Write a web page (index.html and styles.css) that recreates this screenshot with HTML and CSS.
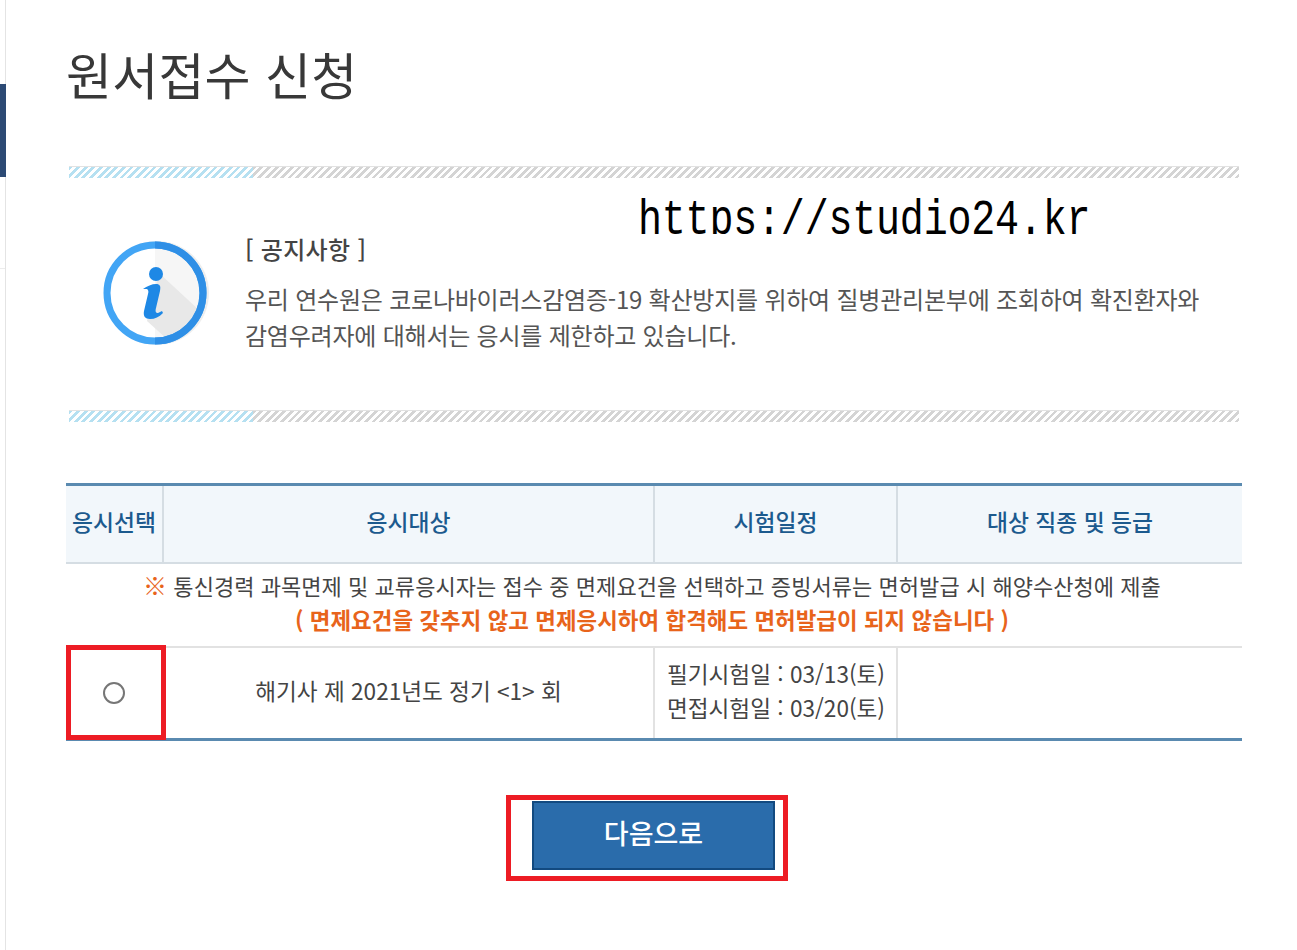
FILE: index.html
```html
<!DOCTYPE html>
<html lang="ko">
<head>
  <meta charset="UTF-8" />
  <meta name="viewport" content="width=device-width, initial-scale=1.0">
  <title>원서접수 신청</title>
  <link rel="stylesheet" href="styles.css">
</head>
<body>
  <aside class="side-rail">
    <div class="side-marker"></div>
    <div class="side-line"></div>
  </aside>

  <main class="content">
    <h1 class="page-title">원서접수 신청</h1>

    <section class="notice">
      <div class="watermark"><span>https://studio24.kr</span></div>
      <svg class="notice-icon" viewBox="0 0 108 108" aria-hidden="true">
        <circle cx="56" cy="54" r="52" fill="#eee" />
        <circle cx="54" cy="54" r="48" fill="#fff" />
        <path d="M54 6a48 48 0 0 1 0 96z" fill="#f6f6f6" />
        <path d="M58 34L99 72A48 48 0 0 1 66 100L46 82z" fill="#e8e8e8" />
        <circle cx="54" cy="54" r="48" fill="none" stroke="#42a5f5" stroke-width="7" />
        <path d="M54 6a48 48 0 0 1 0 96" fill="none" stroke="#2f8fe6" stroke-width="7" />
        <circle cx="55" cy="35" r="7" fill="#1e88e5" />
        <path d="M42 50c4-3 9-5 13-5 4 0 5 2 4 7l-4 17c-1 4 0 5 2 5l4-2 1 2c-4 4-8 6-13 6-5 0-7-3-6-8l4-17c1-3 0-5-2-5h-3z" fill="#1e88e5" />
      </svg>
      <div class="notice-body">
        <h2 class="notice-title">[ 공지사항 ]</h2>
        <p class="notice-text">우리 연수원은 코로나바이러스감염증-19 확산방지를 위하여 질병관리본부에 조회하여 확진환자와<br>감염우려자에 대해서는 응시를 제한하고 있습니다.</p>
      </div>
    </section>

    <table class="exam-table">
      <colgroup>
        <col class="col-select">
        <col class="col-target">
        <col class="col-date">
        <col class="col-grade">
      </colgroup>
      <thead>
        <tr>
          <th>응시선택</th>
          <th>응시대상</th>
          <th>시험일정</th>
          <th>대상 직종 및 등급</th>
        </tr>
      </thead>
      <tbody>
        <tr class="guide-row">
          <td colspan="4">
            <p><span class="mark">※</span> 통신경력 과목면제 및 교류응시자는 접수 중 면제요건을 선택하고 증빙서류는 면허발급 시 해양수산청에 제출</p>
            <p class="warn">( 면제요건을 갖추지 않고 면제응시하여 합격해도 면허발급이 되지 않습니다 )</p>
          </td>
        </tr>
        <tr class="exam-row">
          <td class="select-cell">
            <input type="radio" name="exam" class="radio">
            <span class="highlight highlight-radio"></span>
          </td>
          <td class="target-cell">해기사 제 2021년도 정기 &lt;1&gt; 회</td>
          <td class="date-cell">필기시험일 : 03/13(토)<br>면접시험일 : 03/20(토)</td>
          <td></td>
        </tr>
      </tbody>
    </table>

    <div class="actions">
      <span class="button-wrap">
        <button type="button" class="next-btn">다음으로</button>
        <span class="highlight highlight-btn"></span>
      </span>
    </div>
  </main>
</body>
</html>
```

FILE: styles.css
```css
:root {
  --text-color: #444;
  --head-color: #1c5a8e;
  --table-line: #d5dde3;
  --table-edge: #5a8ab0;
  --mark-red: #ed1c24;
}

* {
  box-sizing: border-box;
}

html,
body {
  height: 100%;
}

body {
  margin: 0;
  display: flex;
  overflow: hidden;
  background: #fff;
  color: var(--text-color);
  font-family: "Noto Sans CJK KR", "Noto Sans", sans-serif;
}

.side-rail {
  flex: 0 0 6px;
  border-right: 1px solid #e4e4e4;
  padding-top: 84px;
}

.side-marker {
  height: 93px;
  margin-right: -1px;
  background: #2c4a74;
}

.side-line {
  height: 1px;
  margin-top: 91px;
  background: #ececec;
}

.content {
  width: 1176px;
  margin-left: 60px;
}

.page-title {
  margin: 0;
  padding-top: 35px;
  height: 166px;
  font-size: 50px;
  line-height: 76px;
  font-weight: 400;
  letter-spacing: 0.2px;
  color: #383838;
}

/* notice box with hatched bars top and bottom */
.notice {
  position: relative;
  display: flex;
  width: 1170px;
  height: 256px;
  margin-left: 3px;
  padding: 65px 0 0 32px;
}

.notice::before,
.notice::after {
  content: "";
  position: absolute;
  left: 0;
  right: 0;
  height: 11px;
  border-top: 1px solid #e2e2e2;
  background:
    repeating-linear-gradient(135deg, transparent 0 2.7px, #fff 2.7px 5.4px) 0 0,
    linear-gradient(90deg, #b5e0f1 184px, #d4d4d4 184px);
}

.notice::before {
  top: 0;
}

.notice::after {
  bottom: 0;
}

/* the tall, narrow url is cut at its baseline in the source image */
.watermark {
  position: absolute;
  left: 569px;
  top: 30px;
  height: 38px;
  overflow: hidden;
  color: #000;
}

.watermark span {
  display: block;
  font-family: "Liberation Mono", monospace;
  font-size: 40px;
  line-height: 40px;
  letter-spacing: -0.2px;
  white-space: nowrap;
  transform: scaleY(1.26);
  transform-origin: 0 0;
}

.notice-icon {
  flex: none;
  width: 108px;
  height: 108px;
  margin-top: 8px;
  overflow: visible;
}

.notice-body {
  margin-left: 36px;
}

.notice-title {
  margin: 0;
  font-size: 24px;
  line-height: 36px;
  font-weight: 500;
  letter-spacing: 0.3px;
  color: #444;
}

.notice-text {
  margin: 14px 0 0;
  font-size: 24px;
  line-height: 36px;
  letter-spacing: -0.22px;
  color: #555;
}

.exam-table {
  width: 1176px;
  margin-top: 61px;
  border-collapse: collapse;
  table-layout: fixed;
  border-bottom: 3px solid var(--table-edge);
  font-size: 22px;
}

.col-select {
  width: 97px;
}

.col-target {
  width: 491px;
}

.col-date {
  width: 243px;
}

.exam-table th {
  height: 78px;
  padding: 0 0 4px;
  border-top: 3px solid var(--table-edge);
  border-bottom: 2px solid var(--table-line);
  border-left: 2px solid var(--table-line);
  background: #f2f7fb;
  color: var(--head-color);
  font-size: 22.8px;
  font-weight: 500;
}

.exam-table th:first-child {
  border-left: 0;
}

.guide-row td {
  height: 84px;
  padding: 0 4px 6px 0;
  border-bottom: 2px solid #e2e2e2;
  text-align: center;
  font-size: 22px;
  line-height: 34px;
  letter-spacing: 0.05px;
}

.guide-row p {
  margin: 0;
}

.mark {
  color: #e8641b;
  font-size: 24px;
  font-weight: 700;
}

.warn {
  color: #e8641b;
  font-size: 22.4px;
  font-weight: 700;
}

.exam-row td {
  height: 93px;
  padding: 0 0 4px;
  border-left: 2px solid #e2e2e2;
  text-align: center;
  font-size: 22.6px;
  line-height: 34px;
}

.exam-row td:first-child {
  border-left: 0;
}

.exam-row .date-cell {
  padding-left: 12px;
  text-align: left;
}

.select-cell {
  position: relative;
}

.radio {
  appearance: none;
  display: block;
  width: 22px;
  height: 22px;
  margin: 5px auto 0;
  border: 2px solid #767676;
  border-radius: 50%;
  background: #fff;
}

.highlight {
  position: absolute;
  border: 5px solid var(--mark-red);
}

.highlight-radio {
  left: 0;
  top: -3px;
  width: 100px;
  height: 95px;
}

.actions {
  display: flex;
  justify-content: center;
  width: 1175px;
  margin-top: 60px;
}

.button-wrap {
  position: relative;
  display: block;
  width: 243px;
  height: 69px;
}

.next-btn {
  display: block;
  width: 100%;
  height: 100%;
  padding: 0 0 7px;
  border: 2px solid #124a80;
  background: #2a6cab;
  color: #fff;
  font-family: inherit;
  font-size: 27px;
  font-weight: 500;
}

.highlight-btn {
  left: -26px;
  top: -6px;
  width: 282px;
  height: 86px;
}
```
